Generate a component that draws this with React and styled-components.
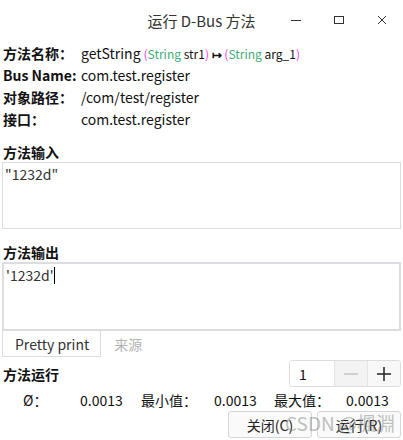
import React from "react";
import styled, { createGlobalStyle } from "styled-components";

const Global = createGlobalStyle`
  html, body { margin: 0; padding: 0; background: #ffffff; }
  body { font-family: "Noto Sans CJK SC", "Noto Sans", sans-serif; color: #111; }
`;

const Window = styled.div`
  position: relative;
  width: 403px;
  height: 440px;
  background: #fff;
  display: flex;
  flex-direction: column;
  overflow: hidden;
  box-sizing: border-box;
`;

const TitleBar = styled.div`
  height: 40px;
  display: grid;
  grid-template-columns: 1fr auto 1fr;
  align-items: center;
`;

const Title = styled.div`
  grid-column: 2;
  font-size: 15px;
  color: #333;
`;

const Controls = styled.div`
  grid-column: 3;
  justify-self: end;
  display: flex;
  align-items: center;
`;

const Ctrl = styled.div`
  width: 43px;
  height: 40px;
  display: flex;
  align-items: center;
  justify-content: center;
  color: #333;
`;

const Body = styled.div`
  padding: 2px 2px 0 3px;
  display: flex;
  flex-direction: column;
`;

const InfoGrid = styled.div`
  display: grid;
  grid-template-columns: 78px 1fr;
  grid-auto-rows: 22px;
  align-items: center;
`;

const Label = styled.div`
  font-weight: 700;
  font-size: 14px;
  white-space: nowrap;
`;

const Value = styled.div`
  font-size: 14px;
  white-space: nowrap;
  display: flex;
  align-items: baseline;
`;

const Sig = styled.span`
  font-size: 12px;
  margin-left: 3px;
`;

const Paren = styled.span`
  color: #f23cf2;
`;

const Type = styled.span`
  color: #3fae78;
`;

const Arrow = styled.span`
  font-weight: 700;
`;

const Heading = styled.div`
  font-weight: 700;
  font-size: 14px;
  line-height: 20px;
  margin-top: ${(p) => p.$mt}px;
`;

const Box = styled.div`
  box-sizing: border-box;
  height: ${(p) => p.$h}px;
  border: ${(p) => p.$bw}px solid #dcdde0;
  margin-left: -1px;
  padding: 1px 2px;
  font-size: 14px;
  color: #333;
  line-height: 20px;
`;

const Caret = styled.span`
  display: inline-block;
  width: 1px;
  height: 17px;
  background: #000;
  vertical-align: -3px;
`;

const Tabs = styled.div`
  display: flex;
  height: 26px;
  margin-left: -1px;
`;

const Tab = styled.div`
  box-sizing: border-box;
  padding: 0 11px 0 12px;
  display: flex;
  align-items: center;
  font-size: 14px;
  color: ${(p) => (p.$active ? "#333" : "#b4b4b4")};
  border: ${(p) => (p.$active ? "1px solid #dcdde0" : "1px solid transparent")};
  border-top: none;
`;

const RunRow = styled.div`
  display: flex;
  justify-content: space-between;
  align-items: center;
  margin-top: 3px;
`;

const Spin = styled.div`
  display: flex;
  width: 112px;
  height: 27px;
  box-sizing: border-box;
  border: 1px solid #dcdde0;
  border-radius: 3px;
  overflow: hidden;
`;

const SpinVal = styled.div`
  flex: 1;
  font-size: 14px;
  display: flex;
  align-items: center;
  padding-left: 9px;
  background: #fff;
`;

const SpinBtn = styled.div`
  width: 32px;
  display: flex;
  align-items: center;
  justify-content: center;
  background: ${(p) => (p.$dim ? "#f3f3f4" : "#f8f8f8")};
  border-left: 1px solid #e4e4e6;
`;

const Stats = styled.div`
  display: grid;
  grid-template-columns: 57px 61px 73px 60px 72px auto;
  align-items: center;
  padding-left: 20px;
  height: 26px;
  font-size: 14px;
`;

const Buttons = styled.div`
  display: flex;
  justify-content: flex-end;
  gap: 5px;
  margin-top: -2px;
`;

const Button = styled.div`
  box-sizing: border-box;
  width: 84px;
  height: 27px;
  border: 1px solid #d6d6d8;
  border-radius: 3px;
  background: #fafafa;
  display: flex;
  align-items: center;
  justify-content: center;
  font-size: 14px;
  color: #222;
`;

const Watermark = styled.div`
  position: absolute;
  left: 285px;
  top: 410px;
  font-size: 19px;
  line-height: 26px;
  color: rgba(130, 130, 130, 0.5);
  white-space: nowrap;
  pointer-events: none;
`;

export default function App() {
  return (
    <Window>
      <Global />
      <TitleBar>
        <Title>运行 D-Bus 方法</Title>
        <Controls>
          <Ctrl>
            <svg width="12" height="12" viewBox="0 0 12 12">
              <path d="M1 6.5h10" stroke="#333" strokeWidth="1" />
            </svg>
          </Ctrl>
          <Ctrl>
            <svg width="12" height="12" viewBox="0 0 12 12">
              <rect x="1.5" y="2.5" width="9" height="7" fill="none" stroke="#333" strokeWidth="1" />
            </svg>
          </Ctrl>
          <Ctrl>
            <svg width="12" height="12" viewBox="0 0 12 12">
              <path d="M2 2l8 8M10 2l-8 8" stroke="#333" strokeWidth="1" />
            </svg>
          </Ctrl>
        </Controls>
      </TitleBar>
      <Body>
        <InfoGrid>
          <Label>方法名称：</Label>
          <Value>
            getString
            <Sig>
              <Paren>(</Paren>
              <Type>String</Type> str1<Paren>)</Paren> <Arrow>↦</Arrow> <Paren>(</Paren>
              <Type>String</Type> arg_1<Paren>)</Paren>
            </Sig>
          </Value>
          <Label>Bus Name:</Label>
          <Value>com.test.register</Value>
          <Label>对象路径：</Label>
          <Value>/com/test/register</Value>
          <Label>接口：</Label>
          <Value>com.test.register</Value>
        </InfoGrid>
        <Heading $mt={12}>方法输入</Heading>
        <Box $h={67} $bw={1}>"1232d"</Box>
        <Heading $mt={13}>方法输出</Heading>
        <Box $h={69} $bw={2}>
          '1232d'<Caret />
        </Box>
        <Tabs>
          <Tab $active>Pretty print</Tab>
          <Tab>来源</Tab>
        </Tabs>
        <RunRow>
          <Heading $mt={0}>方法运行</Heading>
          <Spin>
            <SpinVal>1</SpinVal>
            <SpinBtn $dim>
              <svg width="14" height="14" viewBox="0 0 14 14">
                <path d="M0 7h14" stroke="#c4c4c4" strokeWidth="1.5" />
              </svg>
            </SpinBtn>
            <SpinBtn>
              <svg width="14" height="14" viewBox="0 0 14 14">
                <path d="M0 7h14M7 0v14" stroke="#222" strokeWidth="1.5" />
              </svg>
            </SpinBtn>
          </Spin>
        </RunRow>
        <Stats>
          <span>Ø：</span>
          <span>0.0013</span>
          <span>最小值：</span>
          <span>0.0013</span>
          <span>最大值：</span>
          <span>0.0013</span>
        </Stats>
        <Buttons>
          <Button>关闭(C)</Button>
          <Button>运行(R)</Button>
        </Buttons>
      </Body>
      <Watermark>CSDN @楓淵</Watermark>
    </Window>
  );
}
